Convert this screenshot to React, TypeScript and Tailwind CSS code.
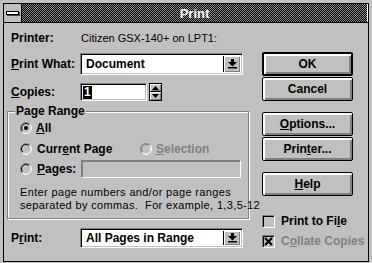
import React from "react";

const sunken =
  "border border-t-[#808080] border-l-[#808080] border-b-white border-r-white shadow-[inset_1px_1px_0_#000,inset_-1px_-1px_0_#c0c0c0]";

function U({ children }: { children: React.ReactNode }) {
  return <span className="underline decoration-1 underline-offset-[1px]">{children}</span>;
}

function Btn({ children, def }: { children: React.ReactNode; def?: boolean }) {
  return (
    <div
      className={`h-[24px] w-[91px] rounded-[2px] border-black ${
        def ? "border-2" : "border"
      } bg-[#c0c0c0] flex items-center justify-center font-bold text-[12px] shadow-[inset_1px_1px_0_#fff,inset_2px_2px_0_#fff,inset_-1px_-1px_0_#808080,inset_-2px_-2px_0_#808080]`}
    >
      {children}
    </div>
  );
}

function ArrowBtn() {
  return (
    <div className="w-[17px] h-full bg-[#c0c0c0] border-l border-black flex items-center justify-center shadow-[inset_1px_1px_0_#fff,inset_-1px_-1px_0_#808080]">
      <svg width="9" height="10" viewBox="0 0 9 10">
        <rect x="3" y="0" width="3" height="3" fill="#000" />
        <polygon points="0,3 9,3 4.5,7.5" fill="#000" />
        <rect x="0" y="8" width="9" height="1.5" fill="#000" />
      </svg>
    </div>
  );
}

function Combo({ text, h }: { text: string; h: string }) {
  return (
    <div className={`w-[163px] ${h} ${sunken} bg-white flex p-[2px]`}>
      <div className="flex-1 flex items-center pl-[3px] font-bold text-[12px]">{text}</div>
      <ArrowBtn />
    </div>
  );
}

function Radio({ checked, disabled }: { checked?: boolean; disabled?: boolean }) {
  return (
    <svg width="12" height="12" viewBox="0 0 12 12" className="shrink-0">
      <circle cx="6" cy="6" r="5" fill="#c0c0c0" />
      <path d="M2.1 9.9 A5.5 5.5 0 0 1 9.9 2.1" fill="none" stroke="#808080" strokeWidth="1" />
      <path d="M9.9 2.1 A5.5 5.5 0 0 1 2.1 9.9" fill="none" stroke="#fff" strokeWidth="1" />
      <path d="M2.8 9.2 A4.5 4.5 0 0 1 9.2 2.8" fill="none" stroke={disabled ? "#808080" : "#000"} strokeWidth="1" />
      <path d="M9.2 2.8 A4.5 4.5 0 0 1 2.8 9.2" fill="none" stroke="#dfdfdf" strokeWidth="1" />
      {checked && <circle cx="6" cy="6" r="2" fill="#000" />}
    </svg>
  );
}

function Check({ checked }: { checked?: boolean }) {
  return (
    <div className={`w-[13px] h-[13px] ${sunken} bg-[#c0c0c0] flex items-center justify-center shrink-0`}>
      {checked && (
        <svg width="9" height="9" viewBox="0 0 9 9">
          <path d="M1 1 L8 8 M8 1 L1 8" stroke="#000" strokeWidth="2" />
        </svg>
      )}
    </div>
  );
}

export default function App() {
  return (
    <div className="w-[372px] h-[263px] bg-[#c0c0c0] pt-[3px] pl-[3px] pr-[3px] pb-[1px] font-['Liberation_Sans',Arial,sans-serif] text-[11px] text-black leading-[13px]">
      <div className="h-full border border-black flex flex-col">
        {/* Title bar */}
        <div className="h-[19px] shrink-0 flex border-b border-black">
          <div className="w-[18px] bg-[#c0c0c0] border-r border-black flex items-center justify-center">
            <div className="w-[13px] h-[4px] bg-white border border-black shadow-[1px_1px_0_#404040]" />
          </div>
          <div className="flex-1 flex items-center justify-center bg-[repeating-conic-gradient(#000_0_25%,#8a8a8a_0_50%)] bg-[length:2px_2px] border-r border-white">
            <span className="text-white font-bold text-[13px] leading-[15px]">Print</span>
          </div>
        </div>
        {/* Client */}
        <div className="flex-1 flex">
          {/* Left column */}
          <div className="w-[258px] flex flex-col">
            <div className="mt-[8px] h-[14px] flex items-center pl-[7px]">
              <span className="w-[70px] font-bold text-[12px]">Printer:</span>
              <span>Citizen GSX-140+ on LPT1:</span>
            </div>
            <div className="mt-[8px] h-[22px] flex items-center pl-[7px]">
              <span className="w-[69px] font-bold text-[12px]">
                <U>P</U>rint What:
              </span>
              <Combo text="Document" h="h-[22px]" />
            </div>
            <div className="mt-[8px] h-[18px] flex items-center pl-[7px]">
              <span className="w-[69px] font-bold text-[12px]">
                <U>C</U>opies:
              </span>
              <div className={`w-[67px] h-[18px] ${sunken} bg-white flex items-center pl-[2px]`}>
                <span className="bg-black text-white font-bold text-[12px] leading-[13px] px-[1px]">1</span>
              </div>
              <div className="ml-[2px] flex flex-col w-[13px] h-[18px]">
                <div className="h-[9px] border border-black bg-[#c0c0c0] flex items-center justify-center shadow-[inset_1px_1px_0_#fff,inset_-1px_-1px_0_#808080]">
                  <svg width="7" height="4" viewBox="0 0 7 4">
                    <polygon points="3.5,0 7,4 0,4" fill="#000" />
                  </svg>
                </div>
                <div className="h-[9px] border border-t-0 border-black bg-[#c0c0c0] flex items-center justify-center shadow-[inset_1px_1px_0_#fff,inset_-1px_-1px_0_#808080]">
                  <svg width="7" height="4" viewBox="0 0 7 4">
                    <polygon points="0,0 7,0 3.5,4" fill="#000" />
                  </svg>
                </div>
              </div>
            </div>
            {/* Group box */}
            <div className="relative ml-[3px] mt-[10px] w-[242px] h-[108px] border border-[#808080] shadow-[inset_1px_1px_0_#fff,1px_1px_0_#fff]">
              <span className="absolute left-[7px] -top-[7px] bg-[#c0c0c0] px-[1px] font-bold text-[12px] leading-[13px]">
                Page Range
              </span>
              <div className="flex flex-col pt-[8px] pl-[12px]">
                <div className="h-[16px] flex items-center">
                  <Radio checked />
                  <span className="ml-[4px] font-bold text-[12px]">
                    <U>A</U>ll
                  </span>
                </div>
                <div className="mt-[5px] h-[16px] flex items-center">
                  <div className="w-[120px] flex items-center">
                    <Radio />
                    <span className="ml-[5px] font-bold text-[12px]">
                      Curr<U>e</U>nt Page
                    </span>
                  </div>
                  <Radio disabled />
                  <span className="ml-[4px] font-bold text-[12px] text-[#808080]">
                    <U>S</U>election
                  </span>
                </div>
                <div className="mt-[3px] h-[18px] flex items-center">
                  <div className="w-[61px] flex items-center">
                    <Radio />
                    <span className="ml-[5px] font-bold text-[12px]">
                      <U>P</U>ages:
                    </span>
                  </div>
                  <div className="w-[160px] h-[18px] border border-t-[#808080] border-l-[#808080] border-b-white border-r-white shadow-[inset_1px_1px_0_#808080,inset_-1px_-1px_0_#c0c0c0]" />
                </div>
                <div className="mt-[8px] text-[11px] tracking-[0.35px] leading-[13px] whitespace-pre">
                  <div>Enter page numbers and/or page ranges</div>
                  <div>separated by commas.  For example, 1,3,5-12</div>
                </div>
              </div>
            </div>
            <div className="mt-[9px] h-[20px] flex items-center pl-[7px]">
              <span className="w-[69px] font-bold text-[12px]">
                P<U>r</U>int:
              </span>
              <Combo text="All Pages in Range" h="h-[20px]" />
            </div>
          </div>
          {/* Right column */}
          <div className="w-[91px] flex flex-col">
            <div className="mt-[29px]">
              <Btn def>OK</Btn>
            </div>
            <div className="mt-[1px]">
              <Btn>Cancel</Btn>
            </div>
            <div className="mt-[11px]">
              <Btn>
                <span>
                  <U>O</U>ptions...
                </span>
              </Btn>
            </div>
            <div className="mt-[1px]">
              <Btn>
                <span>
                  Prin<U>t</U>er...
                </span>
              </Btn>
            </div>
            <div className="mt-[11px]">
              <Btn>
                <span>
                  <U>H</U>elp
                </span>
              </Btn>
            </div>
            <div className="mt-[18px] h-[14px] flex items-center">
              <Check />
              <span className="ml-[6px] font-bold text-[12px] whitespace-nowrap">
                Print to Fi<U>l</U>e
              </span>
            </div>
            <div className="mt-[6px] h-[14px] flex items-center">
              <Check checked />
              <span className="ml-[6px] font-bold text-[12px] text-[#808080] whitespace-nowrap">
                C<U>o</U>llate Copies
              </span>
            </div>
          </div>
        </div>
      </div>
    </div>
  );
}
